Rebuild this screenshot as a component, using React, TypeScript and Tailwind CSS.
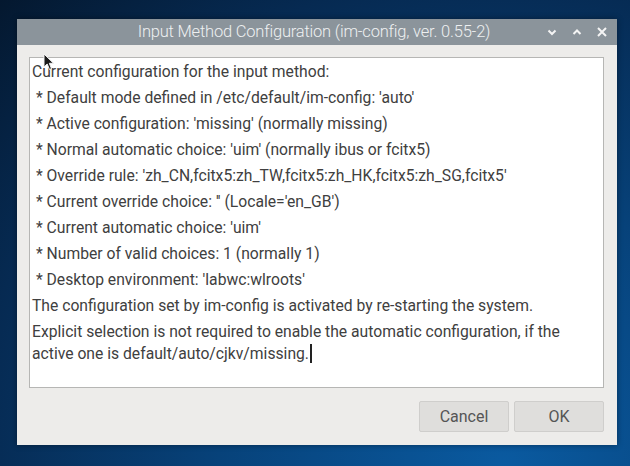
import React from "react";

const LINES: string[] = [
  "Current configuration for the input method:",
  " * Default mode defined in /etc/default/im-config: 'auto'",
  " * Active configuration: 'missing' (normally missing)",
  " * Normal automatic choice: 'uim' (normally ibus or fcitx5)",
  " * Override rule: 'zh_CN,fcitx5:zh_TW,fcitx5:zh_HK,fcitx5:zh_SG,fcitx5'",
  " * Current override choice: '' (Locale='en_GB')",
  " * Current automatic choice: 'uim'",
  " * Number of valid choices: 1 (normally 1)",
  " * Desktop environment: 'labwc:wlroots'",
  "The configuration set by im-config is activated by re-starting the system.",
];

function Pointer() {
  return (
    <svg className="absolute left-[43px] top-[53px]" width="12" height="18" viewBox="0 0 12 18">
      <path d="M1 1 L1 14 L4.2 11 L6.5 16.5 L8.5 15.6 L6.3 10.3 L10.5 10.3 Z" fill="#1a1a1a" stroke="#f2f2f2" strokeWidth="1" />
    </svg>
  );
}

export default function App() {
  return (
    <div
      className="relative w-[630px] h-[466px] overflow-hidden pt-[19px] pl-[17px] bg-[radial-gradient(ellipse_at_80%_100%,#0a5aa0_0%,#07427a_40%,#062a52_75%,#04182f_100%)]"
      style={{ fontFamily: "Roboto, 'Noto Sans', sans-serif" }}
    >
      <div className="w-[600px] h-[426px] flex flex-col bg-[#edecea] shadow-[0_0_6px_rgba(0,0,0,0.4)]">
        {/* title bar */}
        <div className="relative h-[26px] flex items-center justify-center bg-[#8b949b]">
          <span className="text-[16.5px] font-light text-[#eef0f1] tracking-[-0.2px] ml-[-6px]">
            Input Method Configuration (im-config, ver. 0.55-2)
          </span>
          <div className="absolute right-[9px] top-0 h-full flex items-center gap-[13px]">
            <svg width="12" height="12" viewBox="0 0 12 12">
              <path d="M2.5 4.5 L6 8 L9.5 4.5" fill="none" stroke="#f4f4f4" strokeWidth="2" />
            </svg>
            <svg width="12" height="12" viewBox="0 0 12 12">
              <path d="M2.5 8 L6 4.5 L9.5 8" fill="none" stroke="#f4f4f4" strokeWidth="2" />
            </svg>
            <svg width="12" height="12" viewBox="0 0 12 12">
              <path d="M2 2 L10 10 M10 2 L2 10" fill="none" stroke="#f4f4f4" strokeWidth="2" />
            </svg>
          </div>
        </div>

        {/* body */}
        <div className="flex-1 flex flex-col pt-[12px] pl-[12px] pr-[13px] pb-[13px]">
          <div className="h-[331px] bg-white border border-[#b6b6b4] pl-[2px] pt-[3px] text-[15.7px] text-[#404040]">
            {LINES.map((t, i) => (
              <p key={i} className="leading-[22px] mb-[4px] whitespace-pre">
                {t}
              </p>
            ))}
            <p className="leading-[22px]">
              Explicit selection is not required to enable the automatic configuration, if the
              <br />
              active one is default/auto/cjkv/missing.
              <span className="inline-block w-[1.5px] h-[19px] bg-[#222] align-[-4px] ml-[1px]" />
            </p>
          </div>

          <div className="mt-auto flex justify-end gap-[5px]">
            <button className="w-[90px] h-[31px] rounded-[2px] bg-[#dfdedc] border border-[#cfcecc] text-[16px] text-[#555]">
              Cancel
            </button>
            <button className="w-[90px] h-[31px] rounded-[2px] bg-[#dfdedc] border border-[#cfcecc] text-[16px] text-[#555]">
              OK
            </button>
          </div>
        </div>
      </div>
      <Pointer />
    </div>
  );
}
